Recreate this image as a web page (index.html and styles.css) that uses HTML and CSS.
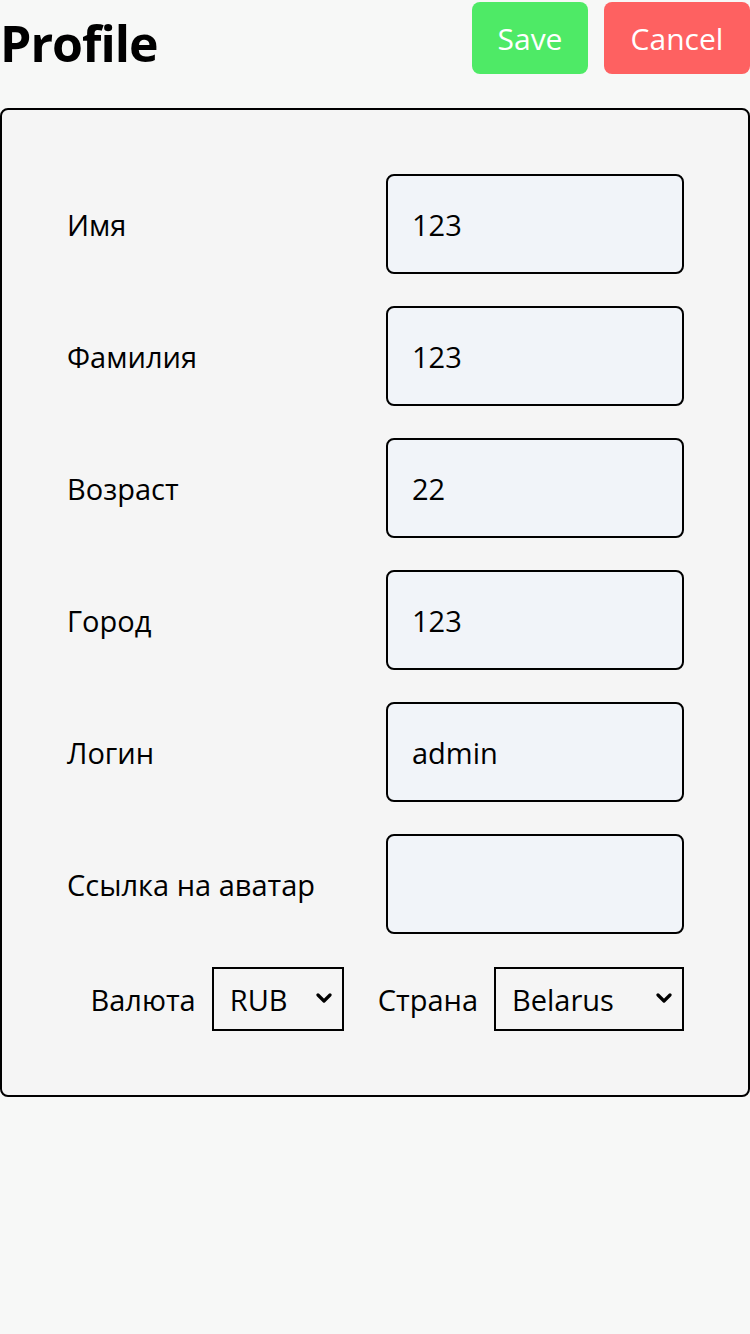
FILE: index.html
```html
<!DOCTYPE html>
<html lang="ru">
<head>
<meta charset="utf-8">
<title>Profile</title>
<link rel="stylesheet" href="styles.css">
</head>
<body>
<header class="header">
  <h1 class="title">Profile</h1>
  <div class="actions">
    <button class="btn btn-save">Save</button>
    <button class="btn btn-cancel">Cancel</button>
  </div>
</header>
<main class="card">
  <div class="row"><label class="label">Имя</label><input class="field" value="123"></div>
  <div class="row"><label class="label">Фамилия</label><input class="field" value="123"></div>
  <div class="row"><label class="label">Возраст</label><input class="field" value="22"></div>
  <div class="row"><label class="label">Город</label><input class="field" value="123"></div>
  <div class="row"><label class="label">Логин</label><input class="field" value="admin"></div>
  <div class="row"><label class="label">Ссылка на аватар</label><input class="field" value=""></div>
  <div class="selects">
    <label class="label">Валюта</label>
    <div class="select-wrap select-currency">
      <select class="select"><option>RUB</option><option>EUR</option><option>USD</option></select>
      <svg class="chevron" viewBox="0 0 16 10" width="16" height="10"><path d="M2 2 L8 8 L14 2" fill="none" stroke="#000" stroke-width="3.2" stroke-linecap="round" stroke-linejoin="round"/></svg>
    </div>
    <label class="label label-country">Страна</label>
    <div class="select-wrap select-country">
      <select class="select"><option>Belarus</option><option>Russia</option><option>Ukraine</option></select>
      <svg class="chevron" viewBox="0 0 16 10" width="16" height="10"><path d="M2 2 L8 8 L14 2" fill="none" stroke="#000" stroke-width="3.2" stroke-linecap="round" stroke-linejoin="round"/></svg>
    </div>
  </div>
</main>
</body>
</html>
```

FILE: styles.css
```css
* { box-sizing: border-box; }
html, body {
  margin: 0;
  padding: 0;
  background: #f7f8f7;
  font-family: "Open Sans", "Noto Sans", sans-serif;
  color: #000;
}
.header {
  display: flex;
  justify-content: space-between;
  align-items: flex-start;
  height: 108px;
}
.title {
  margin: 13px 0 0 0;
  font-size: 50px;
  font-weight: 700;
  line-height: 60px;
  letter-spacing: -1px;
}
.actions {
  display: flex;
  gap: 16px;
  padding-top: 2px;
}
.btn {
  height: 72px;
  border: none;
  border-radius: 8px;
  color: #fff;
  font-family: inherit;
  font-size: 30px;
  padding: 0;
}
.btn-save { width: 116px; background: #4eea66; }
.btn-cancel { width: 146px; background: #fe6161; }
.card {
  border: 2px solid #000;
  border-radius: 8px;
  background: #f5f5f5;
  padding: 64px;
  display: flex;
  flex-direction: column;
  gap: 32px;
}
.row {
  display: flex;
  justify-content: space-between;
  align-items: center;
}
.label {
  font-size: 29px;
  padding-left: 1px;
}
.field {
  width: 298px;
  height: 100px;
  border: 2px solid #000;
  border-radius: 8px;
  background: #f1f4f9;
  font-family: inherit;
  font-size: 29px;
  padding: 0 0 0 24px;
  color: #000;
  outline: none;
}
.selects {
  display: flex;
  justify-content: flex-end;
  align-items: center;
  gap: 16px;
  margin-top: 1px;
}
.label-country { margin-left: 17px; }
.select-wrap { position: relative; height: 64px; flex-shrink: 0; }
.select-currency { width: 132px; }
.select-country { width: 190px; }
.select {
  appearance: none;
  -webkit-appearance: none;
  width: 100%;
  height: 100%;
  border: 2px solid #000;
  border-radius: 0;
  background: transparent;
  font-family: inherit;
  font-size: 29px;
  padding: 0 0 0 16px;
  color: #000;
}
.chevron {
  position: absolute;
  right: 12px;
  top: 26px;
  pointer-events: none;
}
```
